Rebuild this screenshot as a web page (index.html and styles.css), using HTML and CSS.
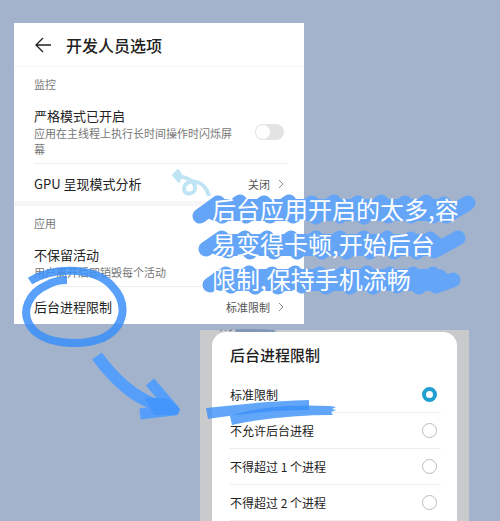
FILE: index.html
```html
<!DOCTYPE html>
<html lang="zh-CN">
<head>
    <meta charset="UTF-8">
    <meta name="viewport" content="width=device-width, initial-scale=1">
    <title>开发人员选项</title>
    <link rel="stylesheet" href="styles.css">
</head>
<body>

    <main class="page">
        <section class="settings">
            <header class="settings-header">
                <button class="back-btn" aria-label="返回">
                    <svg width="18" height="18" viewBox="0 0 18 18"><path d="M17 9H2M9 2L2 9l7 7"/></svg>
                </button>
                <h1>开发人员选项</h1>
            </header>

            <div class="group">
                <h2>监控</h2>
                <div class="item item-switch">
                    <label class="item-text" for="strictMode">
                        <span class="item-name">严格模式已开启</span>
                        <span class="item-desc">应用在主线程上执行长时间操作时闪烁屏幕</span>
                    </label>
                    <input class="switch" type="checkbox" id="strictMode">
                </div>
                <button class="item item-link">
                    <span class="item-name">GPU 呈现模式分析</span>
                    <span class="item-value">关闭</span>
                    <svg class="chevron" width="6" height="10" viewBox="0 0 6 10"><path d="M1 1l4 4-4 4"/></svg>
                </button>
            </div>

            <div class="group">
                <h2>应用</h2>
                <div class="item item-plain">
                    <div class="item-text">
                        <span class="item-name">不保留活动</span>
                        <span class="item-desc">用户离开后即销毁每个活动</span>
                    </div>
                </div>
                <button class="item item-link">
                    <span class="item-name">后台进程限制</span>
                    <span class="item-value">标准限制</span>
                    <svg class="chevron" width="6" height="10" viewBox="0 0 6 10"><path d="M1 1l4 4-4 4"/></svg>
                </button>
            </div>
        </section>

        <section class="backdrop">
            <form class="dialog">
                <h2>后台进程限制</h2>
                <div class="option">
                    <label for="limitStandard">标准限制</label>
                    <input type="radio" name="limit" id="limitStandard" checked>
                </div>
                <div class="option">
                    <label for="limitNone">不允许后台进程</label>
                    <input type="radio" name="limit" id="limitNone">
                </div>
                <div class="option">
                    <label for="limitOne">不得超过 1 个进程</label>
                    <input type="radio" name="limit" id="limitOne">
                </div>
                <div class="option">
                    <label for="limitTwo">不得超过 2 个进程</label>
                    <input type="radio" name="limit" id="limitTwo">
                </div>
            </form>
        </section>

        <!-- hand drawn marks over the panels -->
        <svg class="mark mark-curl" width="46" height="36" viewBox="168 166 46 36">
            <path class="curl-line" d="M178 177C188 176 196 183 195 189C194 195 184 195 184 189C184 179 204 177 209 196"/>
            <path class="curl-head" d="M173 175L178 170L181 174L179 182Z"/>
        </svg>

        <svg class="mark mark-circle" width="112" height="86" viewBox="18 262 112 86">
            <path d="M30 281C52 267 94 266 112 286C129 304 125 327 103 338C80 347 43 344 31 327C20 311 29 293 47 285C54 281 60 280 67 280"/>
        </svg>

        <svg class="mark mark-arrow" width="92" height="72" viewBox="91 350 92 72">
            <path d="M97 356C113 378 131 396 156 405" stroke-width="12"/>
            <path d="M150 382L174 410L140 414" stroke-width="11"/>
            <path class="arrow-fill" d="M145 398L168 398L180 409L177 415L154 415Z"/>
        </svg>

        <svg class="mark mark-underline" width="134" height="32" viewBox="204 396 134 32">
            <path d="M206 408L236 405C260 402 285 401 309 400V410L274 411C250 413 228 416 208 419Z"/>
            <path d="M230 416C256 407 290 404 330 406L336 407L332 409L336 410L331 412L333 415C298 415 264 418 232 425Z"/>
        </svg>

        <svg class="mark mark-smudge" width="64" height="5" viewBox="216 327 64 5">
            <path d="M236 329h24l14 1 2 2h-41z" fill="#8197b6"/>
            <path d="M220 331l2-1M225 331l1-1M229 331l3-1" stroke="#6c7480"/>
        </svg>

        <div class="note">
            <svg class="note-bg" width="288" height="106" viewBox="190 191 288 106">
                <path d="M200 216L218 203L222 216L240 202L246 216L264 203L270 216L289 202L293 216L312 203L316 217L334 202L340 216L358 203L364 217L381 202L388 216L405 203L411 216L426 202L433 216L444 204L446 216L468 203"/>
                <path class="note-core" d="M216 210H440"/>
                <path d="M206 249L222 238L228 251L245 238L250 252L267 238L274 252L291 238L297 252L316 238L322 252L340 238L346 252L364 238L370 252L387 238L394 252L411 239L417 252L430 239L434 251L458 238"/>
                <path class="note-core" d="M220 245H432"/>
                <path d="M210 285L226 274L231 286L249 273L255 287L272 274L278 287L295 273L302 286L320 274L326 287L343 274L350 287L367 273L373 287L390 274L397 286L413 274L419 287L433 274L436 286L453 280"/>
                <path class="note-core" d="M222 280H438"/>
            </svg>
            <p>后台应用开启的太多,容<br>易变得卡顿,开始后台<br>限制,保持手机流畅</p>
        </div>
    </main>

</body>
</html>
```

FILE: styles.css
```css
* {
    box-sizing: border-box;
}

body {
    margin: 0;
    font-family: "Noto Sans CJK SC", "Noto Sans", sans-serif;
    background-color: #a3b3cc;
    color: #222;
}

h1, h2, p {
    margin: 0;
}

button {
    font-family: inherit;
    color: inherit;
    border: none;
    background: none;
    padding: 0;
    cursor: pointer;
}

svg {
    fill: none;
    display: block;
}

.page {
    position: relative;
    padding-top: 23px;
}

/* settings panel */
.settings {
    width: 58%;
    margin-left: 14px;
    background-color: #fff;
}

.settings-header {
    display: flex;
    align-items: center;
    gap: 14px;
    height: 44px;
    padding: 0 20px;
    border-bottom: 1px solid #f5f5f5;
}

.back-btn svg {
    stroke: #222;
    stroke-width: 1.3;
}

.settings-header h1 {
    font-size: 16px;
    font-weight: 500;
    line-height: 24px;
}

.group {
    padding: 0 16px 0 20px;
}

.group + .group {
    border-top: 5px solid #f6f6f7;
}

.group h2 {
    padding-top: 8px;
    font-size: 11px;
    font-weight: 400;
    line-height: 18px;
    color: #777;
}

.item {
    display: flex;
    align-items: center;
    width: 100%;
    text-align: left;
}

.item-switch {
    justify-content: space-between;
    gap: 16px;
    padding: 14px 4px 6px 0;
    border-bottom: 1px solid #eee;
}

.item-plain {
    padding: 14px 0 6px;
    border-bottom: 1px solid #eee;
}

.item-link {
    height: 37px;
    padding: 2px 4px 0 0;
}

.item-text {
    flex: 1;
    display: flex;
    flex-direction: column;
}

.item-name {
    font-size: 13px;
    line-height: 18px;
}

.item-desc {
    font-size: 11px;
    line-height: 16px;
    color: #777;
}

.item-value {
    margin-left: auto;
    font-size: 11px;
    color: #555;
}

.chevron {
    margin-left: 8px;
    stroke: #888;
}

.switch {
    appearance: none;
    flex: none;
    width: 29px;
    height: 16px;
    margin: 0;
    padding: 1px;
    border-radius: 8px;
    background-color: #e3e3e3;
}

.switch::before {
    content: "";
    display: block;
    width: 14px;
    height: 14px;
    border-radius: 50%;
    background-color: #fff;
}

.switch:checked::before {
    margin-left: auto;
}

/* dialog panel */
.backdrop {
    margin: 6px 31px 0 40%;
    padding: 2px 12px 0;
    background-color: #c9cacb;
}

.dialog {
    padding: 8px 16px 0 18px;
    border-radius: 14px 14px 0 0;
    background-color: #fff;
}

.dialog h2 {
    padding-bottom: 7px;
    font-size: 15px;
    font-weight: 500;
    line-height: 30px;
}

.option {
    display: flex;
    align-items: center;
    justify-content: space-between;
    height: 36px;
    padding-right: 4px;
    border-bottom: 1px solid #eee;
    font-size: 12px;
}

.option input {
    appearance: none;
    width: 15px;
    height: 15px;
    margin: 0;
    border: 1px solid #bbb;
    border-radius: 50%;
    background-color: #fff;
}

.option input:checked {
    border: 4px solid #209fd3;
}

/* marks */
.mark {
    position: absolute;
    pointer-events: none;
}

.mark-curl {
    left: 168px;
    top: 166px;
}

.curl-line {
    stroke: #bfe5f5;
    stroke-width: 4;
}

.curl-head {
    fill: #bfe5f5;
    stroke: #bfe5f5;
    stroke-width: 2;
    stroke-linejoin: round;
}

.mark-circle {
    left: 18px;
    top: 262px;
    stroke: #3b90f8;
    stroke-width: 8;
    opacity: 0.85;
}

.mark-arrow {
    left: 91px;
    top: 350px;
    stroke: #559ffa;
    stroke-linejoin: round;
}

.arrow-fill {
    fill: #4496fc;
    stroke: none;
}

.mark-underline {
    left: 204px;
    top: 396px;
}

.mark-underline path {
    fill: #3b90f8;
    fill-opacity: 0.8;
}

.mark-smudge {
    left: 216px;
    top: 327px;
}

/* highlighted note */
.note {
    position: absolute;
    left: 190px;
    top: 191px;
    padding-left: 22px;
    font-size: 24px;
    line-height: 35px;
    color: #fff;
    white-space: nowrap;
}

.note p {
    position: relative;
}

.note-bg {
    position: absolute;
    left: 0;
    top: 0;
    stroke: #65a5f7;
    stroke-width: 15;
    stroke-linecap: round;
    stroke-linejoin: round;
}

.note-core {
    stroke-width: 22;
}
```
